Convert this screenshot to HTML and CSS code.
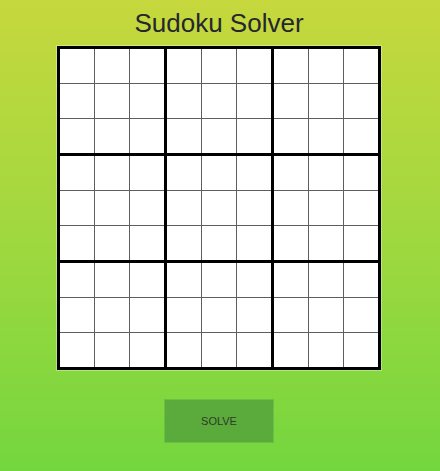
FILE: index.html
```html
<!DOCTYPE html>
<html>
<head>
<meta charset="utf-8">
<link rel="stylesheet" href="styles.css">
</head>
<body>
<div class="page">
  <div class="title">Sudoku Solver</div>
  <div class="board" id="board"></div>
  <button class="solve">SOLVE</button>
</div>
<script>
var b = document.getElementById('board');
for (var i = 0; i < 9; i++) {
  var box = document.createElement('div');
  box.className = 'box';
  for (var j = 0; j < 9; j++) {
    var c = document.createElement('div');
    c.className = 'cell';
    box.appendChild(c);
  }
  b.appendChild(box);
}
</script>
</body>
</html>
```
FILE: styles.css
```css
html, body {
  margin: 0;
  padding: 0;
}
body {
  width: 440px;
  height: 471px;
  overflow: hidden;
  background: linear-gradient(to bottom, #c6d83d 0%, #a0d83f 50%, #74d63e 100%);
  font-family: "Liberation Sans", Arial, sans-serif;
}
.page {
  display: flex;
  flex-direction: column;
  align-items: center;
  padding-right: 2px;
}
.title {
  margin-top: 8px;
  font-size: 26px;
  line-height: 30px;
  color: #26262e;
}
.board {
  margin-top: 8px;
  display: grid;
  grid-template-columns: repeat(3, 104px);
  grid-template-rows: repeat(3, 104px);
  gap: 3px;
  padding: 3px;
  background: #000;
  outline: 1px solid rgba(255, 255, 255, 0.35);
}
.box {
  display: grid;
  grid-template-columns: repeat(3, 34px);
  grid-template-rows: repeat(3, 34px);
  gap: 1px;
  background: #5e5e5e;
}
.cell {
  background: #fff;
}
.solve {
  margin-top: 29px;
  width: 110px;
  height: 44px;
  background: #5aab3b;
  border: 1px solid #68c044;
  color: #2e3a2a;
  font-family: "Liberation Sans", Arial, sans-serif;
  font-size: 11px;
  padding: 0;
}
```
